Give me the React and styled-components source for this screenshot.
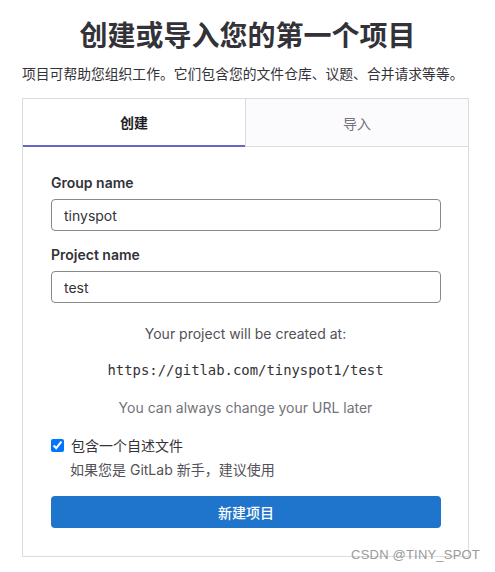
import { useState } from "react";
import styled, { createGlobalStyle } from "styled-components";

const GlobalStyle = createGlobalStyle`
  body {
    margin: 0;
    background: #fff;
    font-family: Inter, "Noto Sans CJK SC", sans-serif;
    color: #333238;
  }
`;

const Page = styled.div`
  position: relative;
  width: 495px;
  height: 572px;
  padding-top: 14px;
  box-sizing: border-box;
`;

const Title = styled.h1`
  margin: 0;
  font-size: 28px;
  line-height: 40px;
  font-weight: 700;
  text-align: center;
  color: #333238;
  font-family: "Noto Sans CJK SC", sans-serif;
`;

const Subtitle = styled.p`
  margin: 9px 0 15px 22px;
  font-size: 13.8px;
  line-height: 20px;
  color: #333238;
  font-family: "Noto Sans CJK SC", sans-serif;
`;

const Card = styled.div`
  margin-left: 22px;
  width: 447px;
  border: 1px solid #dcdcde;
  box-sizing: border-box;
  height: 459px;
`;

const Tabs = styled.div`
  display: flex;
  height: 48px;
`;

const Tab = styled.div`
  flex: 1;
  display: flex;
  align-items: center;
  justify-content: center;
  font-size: 14px;
  font-family: "Noto Sans CJK SC", sans-serif;
  font-weight: ${(p) => (p.active ? 700 : 400)};
  color: ${(p) => (p.active ? "#1f1e24" : "#737278")};
  background: ${(p) => (p.active ? "#fff" : "#fbfafd")};
  border-bottom: ${(p) => (p.active ? "2px solid #6666c4" : "1px solid #dcdcde")};
  border-left: ${(p) => (p.active ? "none" : "1px solid #dcdcde")};
  box-sizing: border-box;
`;

const Body = styled.div`
  padding: 26px 28px 0 28px;
  display: flex;
  flex-direction: column;
`;

const Label = styled.label`
  font-size: 14px;
  font-weight: 600;
  color: #333238;
  line-height: 20px;
  margin-bottom: 6px;
`;

const Input = styled.input`
  width: 390px;
  height: 32px;
  box-sizing: border-box;
  border: 1px solid #89888d;
  border-radius: 4px;
  padding: 0 12px;
  font-family: Inter, sans-serif;
  font-size: 14px;
  color: #333238;
  margin-bottom: ${(p) => p.gap || 0}px;
  outline: none;
`;

const Info = styled.p`
  margin: 0;
  text-align: center;
  font-size: 14px;
  line-height: 20px;
  color: ${(p) => (p.muted ? "#737278" : "#535158")};
  margin-top: ${(p) => p.top}px;
`;

const Url = styled.p`
  margin: 16px 0 0;
  text-align: center;
  font-family: "DejaVu Sans Mono", "Liberation Mono", monospace;
  font-size: 13.9px;
  line-height: 20px;
  color: #333238;
`;

const CheckRow = styled.label`
  display: flex;
  align-items: center;
  gap: 7px;
  margin-top: 17px;
  font-family: "Noto Sans CJK SC", sans-serif;
  font-size: 14px;
  line-height: 20px;
  color: #333238;

  input {
    margin: 0;
    width: 13px;
    height: 13px;
  }
`;

const Help = styled.p`
  margin: 5px 0 0 19px;
  font-family: Inter, "Noto Sans CJK SC", sans-serif;
  font-size: 14px;
  line-height: 20px;
  color: #535158;
`;

const Button = styled.button`
  margin-top: 16px;
  width: 390px;
  height: 32px;
  border: none;
  border-radius: 4px;
  background: #1f75cb;
  color: #fff;
  font-family: "Noto Sans CJK SC", sans-serif;
  font-size: 14px;
  font-weight: 500;
  cursor: pointer;
`;

const Watermark = styled.span`
  position: absolute;
  right: 15px;
  top: 547px;
  font-family: "Liberation Sans", Arial, sans-serif;
  font-size: 13px;
  color: #9a9a9a;
  letter-spacing: 0.2px;
`;

export default function App() {
  const [group, setGroup] = useState("tinyspot");
  const [project, setProject] = useState("test");
  const [readme, setReadme] = useState(true);

  return (
    <Page>
      <GlobalStyle />
      <Title>创建或导入您的第一个项目</Title>
      <Subtitle>项目可帮助您组织工作。它们包含您的文件仓库、议题、合并请求等等。</Subtitle>
      <Card>
        <Tabs>
          <Tab active>创建</Tab>
          <Tab>导入</Tab>
        </Tabs>
        <Body>
          <Label>Group name</Label>
          <Input gap={14} value={group} onChange={(e) => setGroup(e.target.value)} />
          <Label>Project name</Label>
          <Input value={project} onChange={(e) => setProject(e.target.value)} />
          <Info top={21}>Your project will be created at:</Info>
          <Url>https://gitlab.com/{group}1/{project}</Url>
          <Info muted top={18}>You can always change your URL later</Info>
          <CheckRow>
            <input type="checkbox" checked={readme} onChange={(e) => setReadme(e.target.checked)} />
            包含一个自述文件
          </CheckRow>
          <Help>如果您是 GitLab 新手，建议使用</Help>
          <Button>新建项目</Button>
        </Body>
      </Card>
      <Watermark>CSDN @TINY_SPOT</Watermark>
    </Page>
  );
}
